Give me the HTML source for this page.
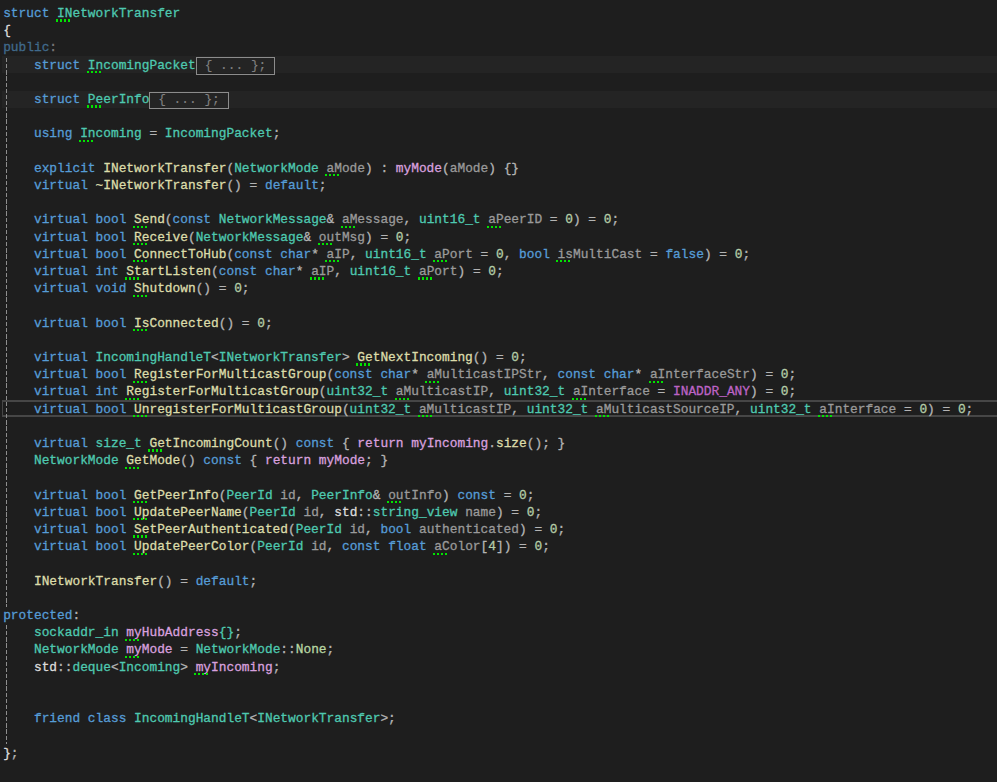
<!DOCTYPE html>
<html><head><meta charset="utf-8"><title>INetworkTransfer</title>
<style>
html,body{margin:0;padding:0;background:#1e1e1e;}
body{width:997px;height:782px;overflow:hidden;position:relative;
 font-family:"Liberation Mono","DejaVu Sans Mono",monospace;font-size:12.84px;color:#dcdcdc;-webkit-text-stroke:0.3px;}
.l{position:absolute;left:3.16px;height:17.2px;line-height:17.2px;white-space:pre;}
.band{position:absolute;left:2px;right:0;height:17.3px;background:#242424;}
.cur{position:absolute;left:2px;right:-4px;top:400.3px;height:12.3px;border:2px solid #464646;border-left-width:1px;}
.guide{position:absolute;left:6px;width:1px;background:repeating-linear-gradient(180deg,#8e8e8e 0 4.3px,transparent 4.3px 6.14px);}
.k{color:#569cd6} .t{color:#4ec9b0} .f{color:#dcdcaa} .a{color:#9a9a9a} .o{color:#b4b4b4}
.w{color:#dcdcdc} .n{color:#b5cea8} .m{color:#bd63c5} .c{color:#d8a0df} .e{color:#b8d7a3}
.h{color:#c8e0d0} .d{color:#406a8c} .g{color:#787878}
.u{position:relative}
.u::after{content:"";position:absolute;left:-1.2px;top:13.5px;width:14.4px;height:2.1px;
 background:repeating-linear-gradient(90deg,#00e400 0 2px,transparent 2px 4.06px);}
.box{position:absolute;box-sizing:border-box;border:1px solid #8c8c8c;color:#808080;white-space:pre;-webkit-text-stroke:0.1px;}
.box span{position:absolute;left:0;right:0;text-align:center;height:17.2px;line-height:17.2px;}
</style></head>
<body>
<div class="band" style="top:56.20px"></div>
<div class="band" style="top:90.60px"></div>
<div class="cur"></div>
<div class="box" style="left:196px;top:57px;width:79px;height:18px"><span style="top:-1.42px">{ ... };</span></div>
<div class="box" style="left:149px;top:92px;width:80px;height:17px"><span style="top:-2.02px">{ ... };</span></div>
<div class="guide" style="top:57.9px;height:549.3px"></div>
<div class="guide" style="top:624.6px;height:119.4px"></div>
<div class="l" style="top:4.98px"><span class="k">struct</span> <span class="t u">INetworkTransfer</span></div>
<div class="l" style="top:22.18px"><span class="w">{</span></div>
<div class="l" style="top:39.38px"><span class="d">public</span><span class="g">:</span></div>
<div class="l" style="top:56.58px">    <span class="k">struct</span> <span class="t u">IncomingPacket</span></div>
<div class="l" style="top:90.98px">    <span class="k">struct</span> <span class="t u">PeerInfo</span></div>
<div class="l" style="top:125.38px">    <span class="k">using</span> <span class="t u">Incoming</span> <span class="o">=</span> <span class="t">IncomingPacket</span><span class="o">;</span></div>
<div class="l" style="top:159.78px">    <span class="k">explicit</span> <span class="f">INetworkTransfer</span><span class="o">(</span><span class="t">NetworkMode</span> <span class="a u">aMode</span><span class="o">)</span> <span class="o">:</span> <span class="c">myMode</span><span class="o">(</span><span class="a">aMode</span><span class="o">)</span> <span class="o">{}</span></div>
<div class="l" style="top:176.98px">    <span class="k">virtual</span> <span class="f">~INetworkTransfer</span><span class="o">()</span> <span class="o">=</span> <span class="k">default</span><span class="o">;</span></div>
<div class="l" style="top:211.38px">    <span class="k">virtual</span> <span class="k">bool</span> <span class="f u">Send</span><span class="o">(</span><span class="k">const</span> <span class="t">NetworkMessage</span><span class="o">&amp;</span> <span class="a u">aMessage</span><span class="o">,</span> <span class="t">uint16_t</span> <span class="a u">aPeerID</span> <span class="o">=</span> <span class="n">0</span><span class="o">)</span> <span class="o">=</span> <span class="n">0</span><span class="o">;</span></div>
<div class="l" style="top:228.58px">    <span class="k">virtual</span> <span class="k">bool</span> <span class="f u">Receive</span><span class="o">(</span><span class="t">NetworkMessage</span><span class="o">&amp;</span> <span class="a u">outMsg</span><span class="o">)</span> <span class="o">=</span> <span class="n">0</span><span class="o">;</span></div>
<div class="l" style="top:245.78px">    <span class="k">virtual</span> <span class="k">bool</span> <span class="f u">ConnectToHub</span><span class="o">(</span><span class="k">const</span> <span class="k">char</span><span class="o">*</span> <span class="a u">aIP</span><span class="o">,</span> <span class="t">uint16_t</span> <span class="a u">aPort</span> <span class="o">=</span> <span class="n">0</span><span class="o">,</span> <span class="k">bool</span> <span class="a u">isMultiCast</span> <span class="o">=</span> <span class="k">false</span><span class="o">)</span> <span class="o">=</span> <span class="n">0</span><span class="o">;</span></div>
<div class="l" style="top:262.98px">    <span class="k">virtual</span> <span class="k">int</span> <span class="f u">StartListen</span><span class="o">(</span><span class="k">const</span> <span class="k">char</span><span class="o">*</span> <span class="a u">aIP</span><span class="o">,</span> <span class="t">uint16_t</span> <span class="a u">aPort</span><span class="o">)</span> <span class="o">=</span> <span class="n">0</span><span class="o">;</span></div>
<div class="l" style="top:280.18px">    <span class="k">virtual</span> <span class="k">void</span> <span class="f u">Shutdown</span><span class="o">()</span> <span class="o">=</span> <span class="n">0</span><span class="o">;</span></div>
<div class="l" style="top:314.58px">    <span class="k">virtual</span> <span class="k">bool</span> <span class="f u">IsConnected</span><span class="o">()</span> <span class="o">=</span> <span class="n">0</span><span class="o">;</span></div>
<div class="l" style="top:348.98px">    <span class="k">virtual</span> <span class="t">IncomingHandleT</span><span class="o">&lt;</span><span class="t">INetworkTransfer</span><span class="o">&gt;</span> <span class="f u">GetNextIncoming</span><span class="o">()</span> <span class="o">=</span> <span class="n">0</span><span class="o">;</span></div>
<div class="l" style="top:366.18px">    <span class="k">virtual</span> <span class="k">bool</span> <span class="f u">RegisterForMulticastGroup</span><span class="o">(</span><span class="k">const</span> <span class="k">char</span><span class="o">*</span> <span class="a u">aMulticastIPStr</span><span class="o">,</span> <span class="k">const</span> <span class="k">char</span><span class="o">*</span> <span class="a u">aInterfaceStr</span><span class="o">)</span> <span class="o">=</span> <span class="n">0</span><span class="o">;</span></div>
<div class="l" style="top:383.38px">    <span class="k">virtual</span> <span class="k">int</span> <span class="f u">RegisterForMulticastGroup</span><span class="o">(</span><span class="t">uint32_t</span> <span class="a u">aMulticastIP</span><span class="o">,</span> <span class="t">uint32_t</span> <span class="a u">aInterface</span> <span class="o">=</span> <span class="m">INADDR_ANY</span><span class="o">)</span> <span class="o">=</span> <span class="n">0</span><span class="o">;</span></div>
<div class="l" style="top:400.58px">    <span class="k">virtual</span> <span class="k">bool</span> <span class="f u">UnregisterForMulticastGroup</span><span class="o">(</span><span class="t">uint32_t</span> <span class="a u">aMulticastIP</span><span class="o">,</span> <span class="t">uint32_t</span> <span class="a u">aMulticastSourceIP</span><span class="o">,</span> <span class="t">uint32_t</span> <span class="a u">aInterface</span> <span class="o">=</span> <span class="n">0</span><span class="o">)</span> <span class="o">=</span> <span class="n">0</span><span class="o">;</span></div>
<div class="l" style="top:434.98px">    <span class="k">virtual</span> <span class="t">size_t</span> <span class="f u">GetIncomingCount</span><span class="o">()</span> <span class="k">const</span> <span class="o">{</span> <span class="c">return</span> <span class="c">myIncoming</span><span class="o">.</span><span class="f">size</span><span class="o">();</span> <span class="o">}</span></div>
<div class="l" style="top:452.18px">    <span class="t">NetworkMode</span> <span class="f u">GetMode</span><span class="o">()</span> <span class="k">const</span> <span class="o">{</span> <span class="c">return</span> <span class="c">myMode</span><span class="o">;</span> <span class="o">}</span></div>
<div class="l" style="top:486.58px">    <span class="k">virtual</span> <span class="k">bool</span> <span class="f u">GetPeerInfo</span><span class="o">(</span><span class="t">PeerId</span> <span class="a">id</span><span class="o">,</span> <span class="t">PeerInfo</span><span class="o">&amp;</span> <span class="a u">outInfo</span><span class="o">)</span> <span class="k">const</span> <span class="o">=</span> <span class="n">0</span><span class="o">;</span></div>
<div class="l" style="top:503.78px">    <span class="k">virtual</span> <span class="k">bool</span> <span class="f u">UpdatePeerName</span><span class="o">(</span><span class="t">PeerId</span> <span class="a">id</span><span class="o">,</span> <span class="w">std</span><span class="o">::</span><span class="t">string_view</span> <span class="a">name</span><span class="o">)</span> <span class="o">=</span> <span class="n">0</span><span class="o">;</span></div>
<div class="l" style="top:520.98px">    <span class="k">virtual</span> <span class="k">bool</span> <span class="f u">SetPeerAuthenticated</span><span class="o">(</span><span class="t">PeerId</span> <span class="a">id</span><span class="o">,</span> <span class="k">bool</span> <span class="a">authenticated</span><span class="o">)</span> <span class="o">=</span> <span class="n">0</span><span class="o">;</span></div>
<div class="l" style="top:538.18px">    <span class="k">virtual</span> <span class="k">bool</span> <span class="f u">UpdatePeerColor</span><span class="o">(</span><span class="t">PeerId</span> <span class="a">id</span><span class="o">,</span> <span class="k">const</span> <span class="k">float</span> <span class="a u">aColor</span><span class="o">[</span><span class="n">4</span><span class="o">])</span> <span class="o">=</span> <span class="n">0</span><span class="o">;</span></div>
<div class="l" style="top:572.58px">    <span class="f">INetworkTransfer</span><span class="o">()</span> <span class="o">=</span> <span class="k">default</span><span class="o">;</span></div>
<div class="l" style="top:606.98px"><span class="k">protected</span><span class="o">:</span></div>
<div class="l" style="top:624.18px">    <span class="t">sockaddr_in</span> <span class="c u">myHubAddress</span><span class="t">{}</span><span class="o">;</span></div>
<div class="l" style="top:641.38px">    <span class="t">NetworkMode</span> <span class="c u">myMode</span> <span class="o">=</span> <span class="t">NetworkMode</span><span class="o">::</span><span class="e">None</span><span class="o">;</span></div>
<div class="l" style="top:658.58px">    <span class="w">std</span><span class="o">::</span><span class="t">deque</span><span class="o">&lt;</span><span class="t">Incoming</span><span class="o">&gt;</span> <span class="c u">myIncoming</span><span class="o">;</span></div>
<div class="l" style="top:710.18px">    <span class="k">friend</span> <span class="k">class</span> <span class="t">IncomingHandleT</span><span class="o">&lt;</span><span class="t">INetworkTransfer</span><span class="o">&gt;;</span></div>
<div class="l" style="top:744.58px"><span class="w">}</span><span class="o">;</span></div>
</body></html>
